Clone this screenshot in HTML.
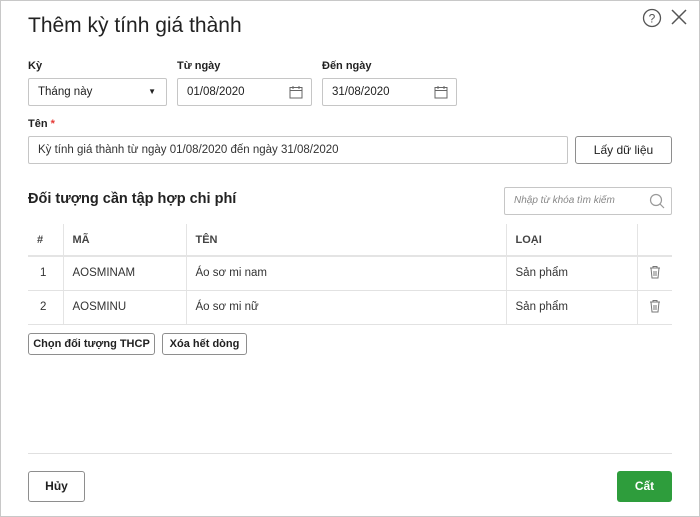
<!DOCTYPE html>
<html><head><meta charset="utf-8"><style>
*{box-sizing:border-box;margin:0;padding:0}
body{width:700px;height:517px;background:#fff;font-family:"Liberation Sans","Noto Sans CJK SC",sans-serif;color:#212121;font-size:12px;position:relative;overflow:hidden}
.frame{position:absolute;left:0;top:0;width:700px;height:517px;border:1px solid #c8c8c8}
.a{position:absolute}
.lbl{font-size:11px;font-weight:bold;color:#222}
.inp{position:absolute;border:1px solid #c6c6c6;border-radius:2px;height:28px;line-height:26px;padding-left:9px;font-size:11.5px;background:#fff}
.btn{position:absolute;border:1px solid #8e8e8e;border-radius:3px;background:#fff;text-align:center;font-size:12px}
table{position:absolute;left:28px;top:224px;width:644px;border-collapse:collapse;font-size:11.5px}
td,th{height:34px;text-align:left;padding-left:9px;font-weight:normal;color:#333}
th{font-weight:bold;font-size:11px;height:32px;border-bottom:2px solid #e4e4e4;color:#444}
td{border-bottom:1px solid #e2e2e2}
.v{border-right:1px solid #e4e4e4}
</style></head><body>
<div class="frame"></div>
<div class="a" style="left:28px;top:14px;font-size:21px;color:#222">Thêm kỳ tính giá thành</div>
<svg class="a" style="left:642px;top:8px" width="20" height="20"><circle cx="10" cy="10" r="8.5" fill="none" stroke="#555" stroke-width="1.3"/><text x="10" y="14.5" font-size="12" text-anchor="middle" fill="#555" font-family="Liberation Sans">?</text></svg>
<svg class="a" style="left:670px;top:8px" width="18" height="18"><path d="M2 2L16 16M16 2L2 16" stroke="#555" stroke-width="1.5"/></svg>
<div class="a lbl" style="left:28px;top:60px">Kỳ</div>
<div class="a lbl" style="left:177px;top:60px">Từ ngày</div>
<div class="a lbl" style="left:322px;top:60px">Đến ngày</div>
<div class="inp" style="left:28px;top:78px;width:139px">Tháng này<span class="a" style="right:10px;top:0;font-size:8px">▼</span></div>
<div class="inp" style="left:177px;top:78px;width:135px">01/08/2020<svg class="a" style="right:8px;top:6px" width="14" height="14"><rect x="1" y="2.5" width="12" height="10.5" fill="none" stroke="#666"/><path d="M1 5.5h12M4 1v3M10 1v3" stroke="#666"/></svg></div>
<div class="inp" style="left:322px;top:78px;width:135px">31/08/2020<svg class="a" style="right:8px;top:6px" width="14" height="14"><rect x="1" y="2.5" width="12" height="10.5" fill="none" stroke="#666"/><path d="M1 5.5h12M4 1v3M10 1v3" stroke="#666"/></svg></div>
<div class="a lbl" style="left:28px;top:118px">Tên <span style="color:#e53935">*</span></div>
<div class="inp" style="left:28px;top:136px;width:540px;color:#333">Kỳ tính giá thành từ ngày 01/08/2020 đến ngày 31/08/2020</div>
<div class="btn" style="left:575px;top:136px;width:97px;height:28px;line-height:26px">Lấy dữ liệu</div>
<div class="a" style="left:28px;top:191px;font-size:14.5px;font-weight:bold;color:#222">Đối tượng cần tập hợp chi phí</div>
<div class="inp" style="left:504px;top:187px;width:168px;font-size:10px;font-style:italic;color:#888">Nhập từ khóa tìm kiếm<svg class="a" style="right:6px;top:5px" width="16" height="16"><circle cx="7" cy="7" r="5.5" fill="none" stroke="#999" stroke-width="1.2"/><path d="M11 11l4 4" stroke="#999" stroke-width="1.2"/></svg></div>
<table>
<tr><th class="v" style="width:35px">#</th><th class="v" style="width:123px">MÃ</th><th class="v" style="width:320px">TÊN</th><th class="v" style="width:131px">LOẠI</th><th></th></tr>
<tr><td class="v" style="padding-left:12px">1</td><td class="v">AOSMINAM</td><td class="v">Áo sơ mi nam</td><td class="v">Sản phẩm</td><td style="text-align:center;padding:0"><svg width="14" height="14"><path d="M2 3h10M5 3V1.5h4V3M3 3l1 10h6l1-10M6 6v5M8 6v5" fill="none" stroke="#777"/></svg></td></tr>
<tr><td class="v" style="padding-left:12px">2</td><td class="v">AOSMINU</td><td class="v">Áo sơ mi nữ</td><td class="v">Sản phẩm</td><td style="text-align:center;padding:0"><svg width="14" height="14"><path d="M2 3h10M5 3V1.5h4V3M3 3l1 10h6l1-10M6 6v5M8 6v5" fill="none" stroke="#777"/></svg></td></tr>
</table>
<div class="btn" style="left:28px;top:333px;width:127px;height:22px;line-height:20px;font-size:11px;font-weight:bold">Chọn đối tượng THCP</div>
<div class="btn" style="left:162px;top:333px;width:85px;height:22px;line-height:20px;font-size:11px;font-weight:bold">Xóa hết dòng</div>
<div class="a" style="left:28px;top:453px;width:644px;height:1px;background:#e0e0e0"></div>
<div class="btn" style="left:28px;top:471px;width:57px;height:31px;line-height:29px;font-weight:bold">Hủy</div>
<div class="a" style="left:617px;top:471px;width:55px;height:31px;line-height:31px;background:#2e9d3c;border-radius:3px;color:#fff;text-align:center;font-weight:bold">Cất</div>
</body></html>
